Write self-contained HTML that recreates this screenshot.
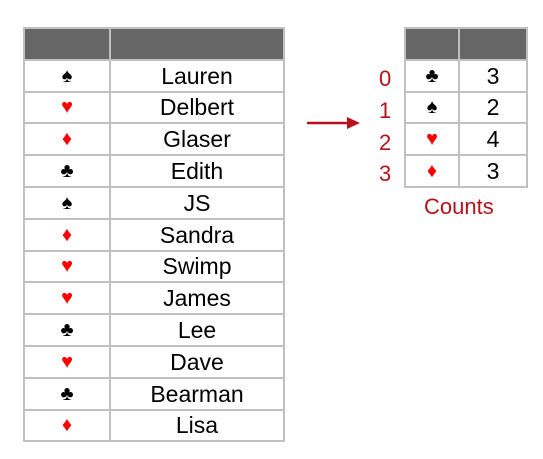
<!DOCTYPE html><html><head><style>
body{margin:0;width:543px;height:459px;background:#fff;font-family:"Liberation Sans",sans-serif;position:relative;overflow:hidden}
table{position:absolute;border-collapse:collapse}
td{border:2px solid #c0c0c0;text-align:center;padding:0;font-size:23px;color:#000;line-height:26px}
tr{height:31.8px}
tr.h td{background:#666;border-color:#c0c0c0}
.r{color:#f00}.b{color:#000}
.s{font-size:20px}
.idx{position:absolute;color:#b5121b;font-size:22px;left:379px}
</style></head><body>
<table style="left:23px;top:27px;width:262px">
<tr class="h"><td style="width:84px"></td><td></td></tr>
<tr><td class="s">♠</td><td>Lauren</td></tr>
<tr><td class="s r">♥</td><td>Delbert</td></tr>
<tr><td class="s r">♦</td><td>Glaser</td></tr>
<tr><td class="s">♣</td><td>Edith</td></tr>
<tr><td class="s">♠</td><td>JS</td></tr>
<tr><td class="s r">♦</td><td>Sandra</td></tr>
<tr><td class="s r">♥</td><td>Swimp</td></tr>
<tr><td class="s r">♥</td><td>James</td></tr>
<tr><td class="s">♣</td><td>Lee</td></tr>
<tr><td class="s r">♥</td><td>Dave</td></tr>
<tr><td class="s">♣</td><td>Bearman</td></tr>
<tr><td class="s r">♦</td><td>Lisa</td></tr>
</table>
<table style="left:404px;top:27px;width:124px">
<tr class="h"><td style="width:52px"></td><td></td></tr>
<tr><td class="s">♣</td><td>3</td></tr>
<tr><td class="s">♠</td><td>2</td></tr>
<tr><td class="s r">♥</td><td>4</td></tr>
<tr><td class="s r">♦</td><td>3</td></tr>
</table>
<div class="idx" style="top:66px">0</div>
<div class="idx" style="top:98px">1</div>
<div class="idx" style="top:130px">2</div>
<div class="idx" style="top:161px">3</div>
<div style="position:absolute;left:424px;top:194px;color:#b5121b;font-size:22px">Counts</div>
<svg style="position:absolute;left:305px;top:115px" width="56" height="16"><line x1="2" y1="8" x2="44" y2="8" stroke="#b5121b" stroke-width="2.5"/><polygon points="42,2 55,8 42,14" fill="#b5121b"/></svg>
</body></html>
